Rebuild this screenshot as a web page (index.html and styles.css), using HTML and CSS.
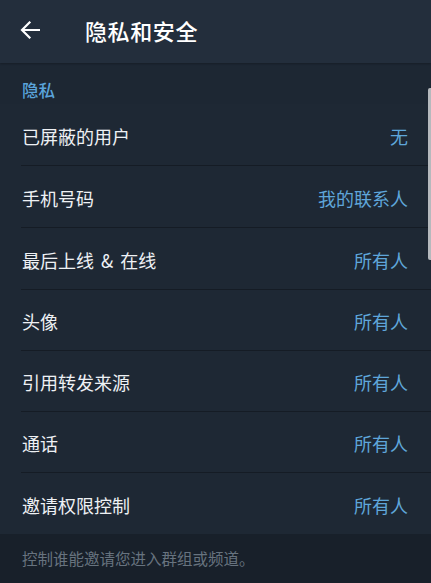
FILE: index.html
```html
<!DOCTYPE html>
<html lang="zh-CN">
<head>
<meta charset="utf-8">
<link rel="stylesheet" href="styles.css">
</head>
<body>
<div class="screen">
  <header class="topbar">
    <svg class="back" width="20" height="18" viewBox="0 0 20 18"><path d="M19 9H2.5M9.5 1.5L2 9l7.5 7.5" fill="none" stroke="#fff" stroke-width="2.2" stroke-linecap="square"/></svg>
    <h1 class="title">隐私和安全</h1>
  </header>
  <main class="content">
    <div class="section-title">隐私</div>
    <div class="list">
      <div class="row"><span class="label">已屏蔽的用户</span><span class="value">无</span></div>
      <div class="row"><span class="label">手机号码</span><span class="value">我的联系人</span></div>
      <div class="row"><span class="label spaced">最后上线 &amp; 在线</span><span class="value">所有人</span></div>
      <div class="row short"><span class="label">头像</span><span class="value">所有人</span></div>
      <div class="row short"><span class="label">引用转发来源</span><span class="value">所有人</span></div>
      <div class="row short"><span class="label">通话</span><span class="value">所有人</span></div>
      <div class="row short last"><span class="label">邀请权限控制</span><span class="value">所有人</span></div>
    </div>
    <div class="footer">控制谁能邀请您进入群组或频道。</div>
  </main>
  <div class="scrollbar"></div>
</div>
</body>
</html>
```
FILE: styles.css
```css
* { box-sizing: border-box; margin: 0; padding: 0; }
html, body { width: 431px; height: 583px; overflow: hidden; background: #1d2733; }
body { font-family: "Noto Sans CJK SC", "Noto Sans", sans-serif; }
.screen { position: relative; width: 431px; height: 583px; display: flex; flex-direction: column; }
.topbar {
  height: 63px; background: #232e3c; display: flex; align-items: center;
  padding-left: 20px; flex-shrink: 0;
  box-shadow: 0 1px 2px rgba(0,0,0,0.25);
}
.back { display: block; margin-top: -3px; }
.title { margin-left: 45px; font-size: 22px; font-weight: 500; color: #ffffff; letter-spacing: 0.6px; margin-top: -4px; }
.content { flex: 1; display: flex; flex-direction: column; }
.section-title { height: 41px; padding: 16px 0 0 22px; font-size: 16.5px; font-weight: 500; color: #5aa4db; line-height: 22px; }
.list { background: #1e2834; }
.row {
  height: 62px; margin-left: 21px; padding: 2px 23px 0 1px; display: flex; align-items: center; justify-content: space-between;
  border-bottom: 1px solid #151c25; font-size: 18px;
}
.row.short { height: 61px; }
.row.last { border-bottom: none; }
.label { color: #eef1f4; }
.spaced { word-spacing: 3px; }
.value { color: #5fa6da; }
.footer { flex: 1; background: #18202a; padding: 13px 0 0 22px; font-size: 15.5px; color: #67737f; }
.scrollbar { position: absolute; right: 0; top: 88px; width: 3px; height: 172px; background: #b5b9bd; border-radius: 2px 0 0 2px; }
```
